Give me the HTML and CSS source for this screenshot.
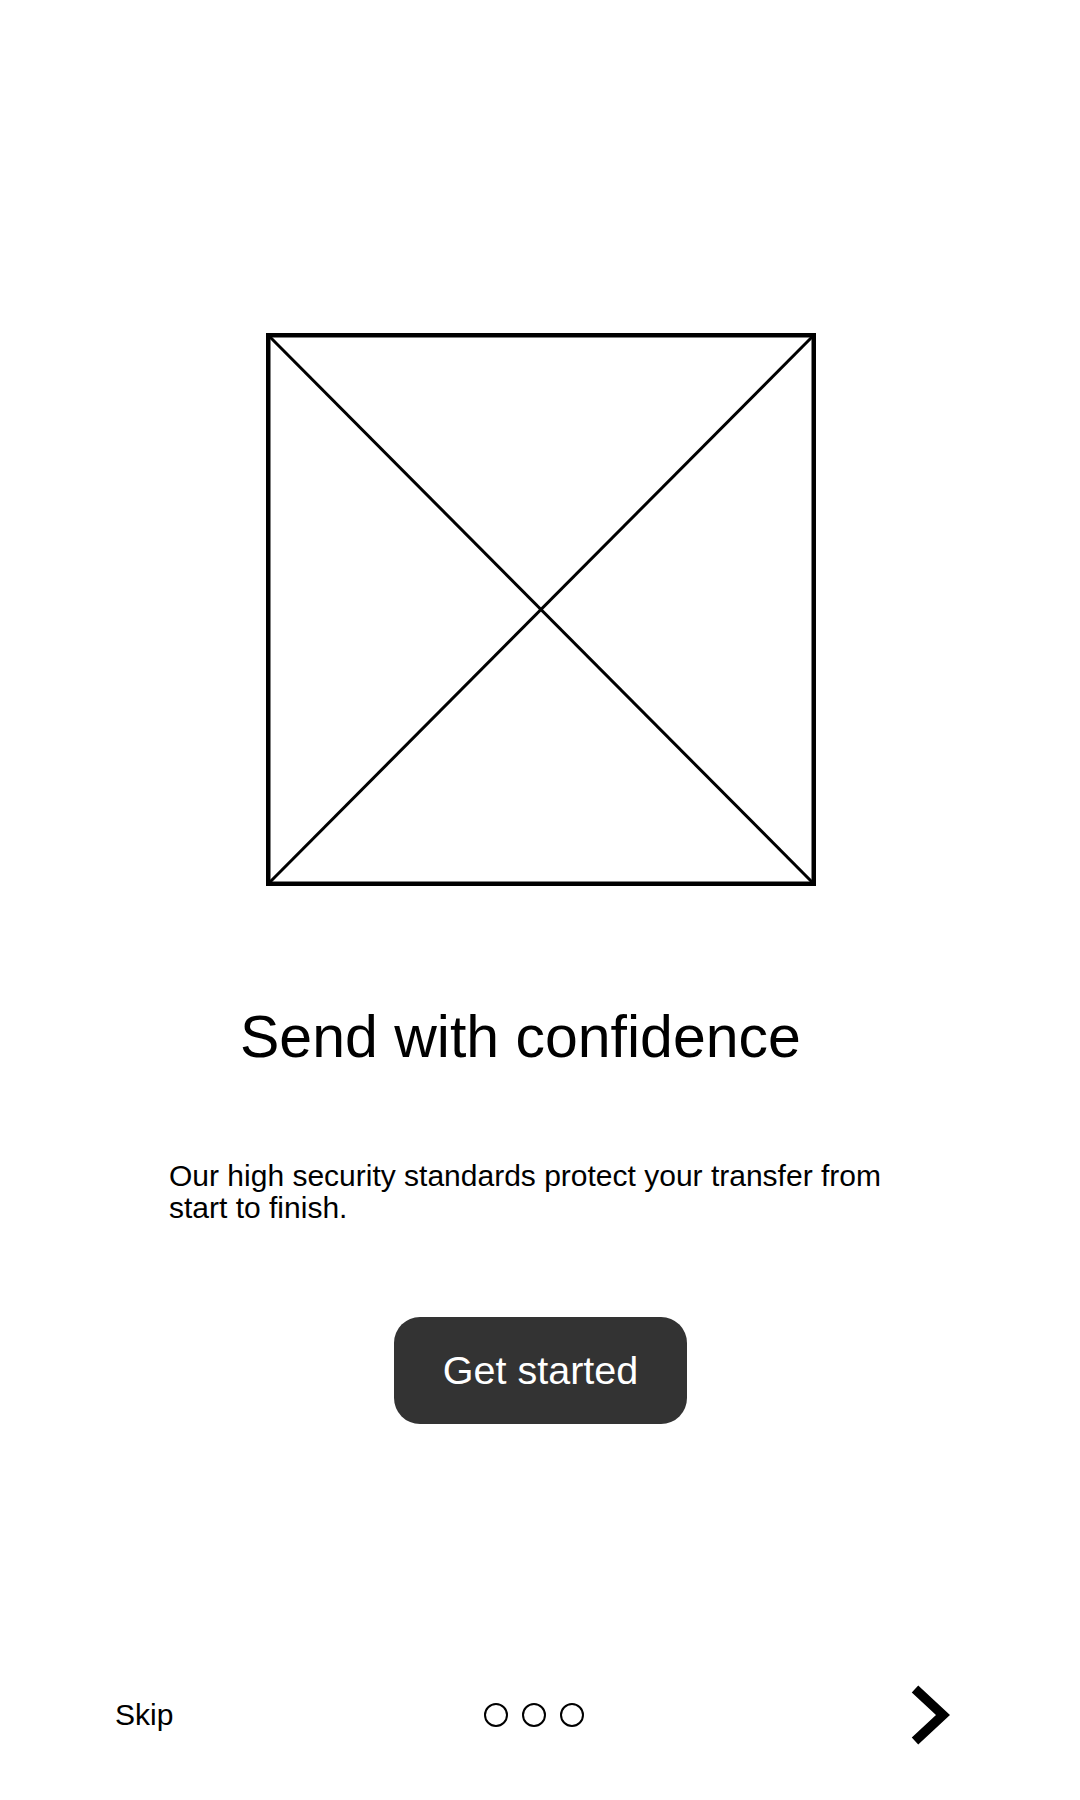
FILE: index.html
```html
<!DOCTYPE html>
<html lang="en">
<head>
<meta charset="utf-8">
<title>Send with confidence</title>
<link rel="stylesheet" href="styles.css">
</head>
<body>
<div class="screen">
  <div class="placeholder">
    <svg viewBox="0 0 550 553" width="550" height="553" aria-hidden="true">
      <rect x="2.25" y="2.25" width="545.5" height="548.5" fill="none" stroke="#000" stroke-width="4.5"/>
      <line x1="3" y1="3" x2="547" y2="550" stroke="#000" stroke-width="3"/>
      <line x1="547" y1="3" x2="3" y2="550" stroke="#000" stroke-width="3"/>
    </svg>
  </div>
  <h1 class="title">Send with confidence</h1>
  <p class="desc">Our high security standards protect your transfer from start to finish.</p>
  <div class="cta-row">
    <button class="cta" type="button">Get started</button>
  </div>
  <nav class="footer">
    <span class="skip">Skip</span>
    <div class="dots">
      <span class="dot"></span>
      <span class="dot"></span>
      <span class="dot"></span>
    </div>
    <svg class="next" viewBox="0 0 42 62" width="42" height="62" aria-hidden="true">
      <polyline points="4,5 32,31 4,57" fill="none" stroke="#000" stroke-width="9.5" stroke-linejoin="miter" stroke-miterlimit="4"/>
    </svg>
  </nav>
</div>
</body>
</html>
```

FILE: styles.css
```css
html, body {
  margin: 0;
  padding: 0;
  background: #fff;
}

body {
  font-family: "Liberation Sans", Arial, sans-serif;
  color: #000;
}

.screen {
  width: 1080px;
  height: 1800px;
  display: flex;
  flex-direction: column;
  box-sizing: border-box;
}

.placeholder {
  width: 550px;
  height: 553px;
  margin: 333px 0 0 266px;
}

.placeholder svg {
  display: block;
}

.title {
  margin: 117px 0 0 0;
  padding-left: 240px;
  font-size: 59px;
  font-weight: normal;
  line-height: 69px;
}

.desc {
  margin: 88px 0 0 0;
  padding-left: 169px;
  width: 740px;
  font-size: 30px;
  line-height: 32px;
}

.cta-row {
  display: flex;
  justify-content: center;
  margin-top: 93px;
  padding-left: 1px;
}

.cta {
  width: 293px;
  height: 107px;
  border: none;
  border-radius: 26px;
  background: #333333;
  color: #fff;
  font-family: "Liberation Sans", Arial, sans-serif;
  font-size: 39.5px;
  line-height: 107px;
  padding: 0;
}

.footer {
  margin-top: 260px;
  height: 62px;
  display: grid;
  grid-template-columns: 1fr auto 1fr;
  align-items: center;
  padding: 0 127px 0 115px;
}

.skip {
  font-size: 30px;
  line-height: 36px;
  justify-self: start;
}

.dots {
  display: flex;
  gap: 14px;
}

.dot {
  width: 24px;
  height: 24px;
  box-sizing: border-box;
  border: 2.5px solid #000;
  border-radius: 50%;
}

.next {
  justify-self: end;
  display: block;
}
```
